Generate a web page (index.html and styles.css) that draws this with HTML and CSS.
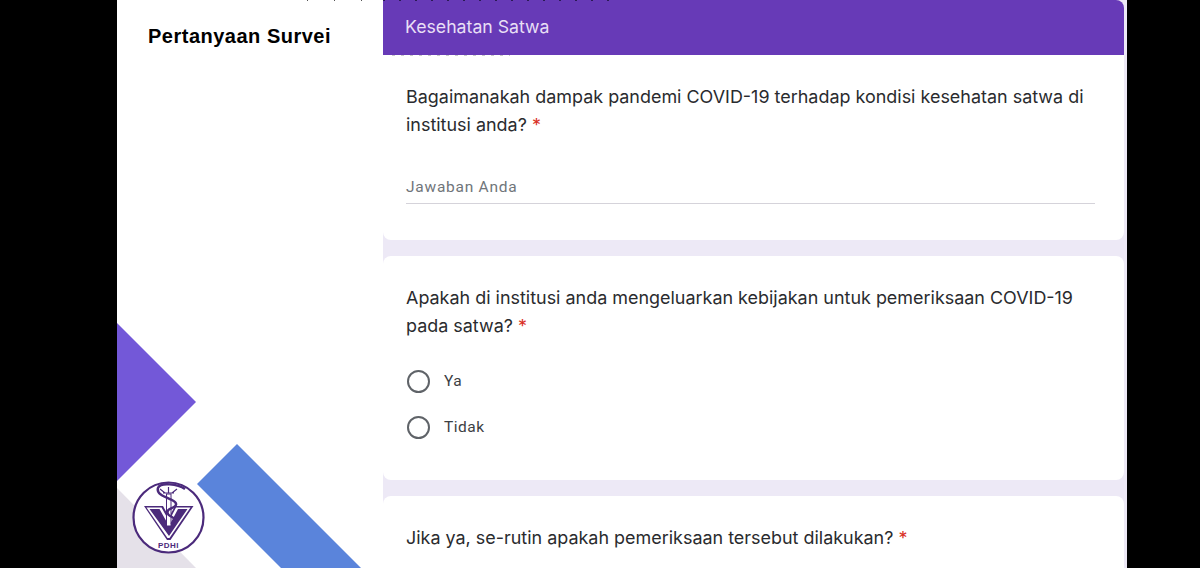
FILE: index.html
```html
<!DOCTYPE html>
<html lang="en">
<head>
    <meta charset="UTF-8">
    <title>Pertanyaan Survei</title>
    <link rel="stylesheet" href="styles.css">
</head>
<body>
    <div class="slide">
        <div class="side">
            <h2 class="side-title">Pertanyaan Survei</h2>
            <svg class="side-art" width="266" height="270" viewBox="117 298 266 270">
                <polygon points="117,323 196,402 117,481" fill="#7358d8"/>
                <polygon points="117,488 196,568 117,568" fill="#e5e1e9"/>
                <polygon points="237,444 197,484 281,568 361,568" fill="#5a84db"/>
                <circle cx="168.5" cy="517.5" r="35" fill="#fff" stroke="#4b2a7b" stroke-width="2.2"/>
                <!-- V -->
                <polygon points="144,506 163,506 169,517 175,506 193.500,506 170.500,540 167,540" fill="#4b2a7b"/>
                <polygon points="146.500,507.500 161.500,507.500 169,521 176,507.500 190.500,507.500 169.500,538 167.500,538" fill="#fff"/>
                <polygon points="149.500,509 159.500,509 169,526 178,509 187.500,509 169,536" fill="#4b2a7b"/>
                <!-- staff and snake -->
                <rect x="166.500" y="494" width="4.500" height="32" fill="#fff" stroke="#4b2a7b" stroke-width="1"/>
                <path d="M163 493h11M160 489l5 4M177 489l-5 4M168.500 487v6" fill="none" stroke="#4b2a7b" stroke-width="1.200"/>
                <path d="M185 489c-7-5-25-7-27-1-2 6 7 9 14 12 6 3 5 6 0 8-6 2-6 6 0 9 4 2 3 5-1 7" fill="none" stroke="#4b2a7b" stroke-width="2.400"/>
                <text class="logo-text" x="168.500" y="548" text-anchor="middle">PDHI</text>
            </svg>
        </div>
        <div class="form">
            <div class="form-header">Kesehatan Satwa</div>
            <div class="card card-first">
                <p class="question">Bagaimanakah dampak pandemi COVID-19 terhadap kondisi kesehatan satwa di institusi anda? <span class="req">*</span></p>
                <div class="answer">Jawaban Anda</div>
            </div>
            <div class="card">
                <p class="question">Apakah di institusi anda mengeluarkan kebijakan untuk pemeriksaan COVID-19 pada satwa? <span class="req">*</span></p>
                <div class="options">
                    <div class="option"><span class="radio"></span>Ya</div>
                    <div class="option"><span class="radio"></span>Tidak</div>
                </div>
            </div>
            <div class="card card-last">
                <p class="question">Jika ya, se-rutin apakah pemeriksaan tersebut dilakukan? <span class="req">*</span></p>
            </div>
        </div>
    </div>
</body>
</html>
```

FILE: styles.css
```css
html, body {
    margin: 0;
    height: 100%;
    background-color: #000;
    overflow: hidden;
}
.slide {
    display: flex;
    width: 1010px;
    height: 568px;
    margin-left: 117px;
    background-color: #fff;
    overflow: hidden;
}
.side {
    position: relative;
    width: 266px;
    flex-shrink: 0;
}
/* scan specks along the top edge */
.side::before {
    content: "";
    position: absolute;
    top: 0;
    left: 190px;
    width: 76px;
    height: 1px;
    background: repeating-linear-gradient(90deg, #555 0 1px, transparent 1px 27px);
}
.side-title {
    margin: 0;
    padding: 23px 0 0 31px;
    font-family: "Liberation Sans", Arial, sans-serif;
    font-size: 20px;
    line-height: 26px;
    font-weight: bold;
    letter-spacing: 0.5px;
    color: #000;
}
.side-art {
    position: absolute;
    left: 0;
    bottom: 0;
}
.logo-text {
    font-family: "Liberation Sans", Arial, sans-serif;
    font-size: 8px;
    font-weight: bold;
    letter-spacing: 0.5px;
    fill: #4b2a7b;
}
.form {
    width: 744px;
    padding-right: 3px;
    box-sizing: border-box;
    background-color: #ede9f6;
}
.form-header {
    position: relative;
    height: 55px;
    box-sizing: border-box;
    padding: 15px 22px 0;
    background-color: #673ab7;
    border-top-right-radius: 8px;
    font-family: Inter, sans-serif;
    font-size: 17.7px;
    line-height: 24px;
    color: #e8dff5;
}
.form-header::before {
    content: "";
    position: absolute;
    top: 0;
    left: 0;
    width: 230px;
    height: 1px;
    background: repeating-linear-gradient(90deg, #2b1a55 0 2px, transparent 2px 16px);
}
.form-header::after {
    content: "";
    position: absolute;
    top: 55px;
    left: 9px;
    width: 118px;
    height: 1px;
    background: repeating-linear-gradient(90deg, #c9c9c9 0 3px, transparent 3px 9px);
}
.card {
    background-color: #fff;
    border-radius: 8px;
    padding: 28px 23px 0;
    margin-bottom: 16px;
    height: 224px;
    box-sizing: border-box;
}
.card-first {
    height: 185px;
    border-radius: 0 0 8px 8px;
}
.question {
    margin: 0;
    font-family: Inter, sans-serif;
    font-size: 17.95px;
    line-height: 28px;
    color: #2a2b2e;
}
.req {
    color: #d93025;
}
.answer {
    margin-top: 38px;
    padding-bottom: 6px;
    width: 689px;
    border-bottom: 1px solid #d5d3da;
    font-family: Roboto, sans-serif;
    font-size: 15.5px;
    line-height: 20px;
    letter-spacing: 0.75px;
    color: #70757a;
}
.options {
    margin-top: 29px;
    margin-left: 1px;
}
.option {
    display: flex;
    align-items: center;
    gap: 14px;
    height: 24px;
    margin-bottom: 22px;
    font-family: Roboto, sans-serif;
    font-size: 15.5px;
    letter-spacing: 0.5px;
    color: #3c4043;
}
.radio {
    width: 23px;
    height: 23px;
    box-sizing: border-box;
    border: 2.5px solid #5f6368;
    border-radius: 50%;
}
```
